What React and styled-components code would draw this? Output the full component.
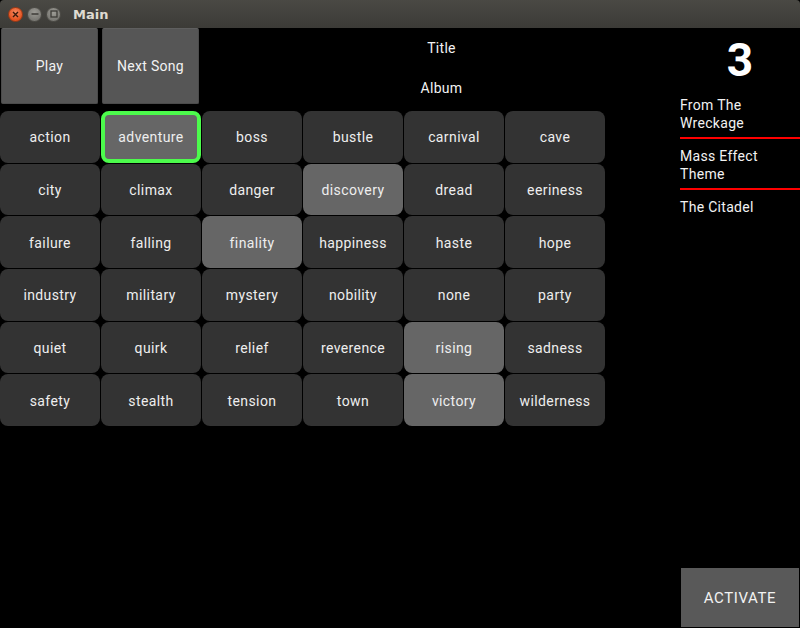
import React from 'react';
import styled, { createGlobalStyle } from 'styled-components';

const GlobalStyle = createGlobalStyle`
  html, body { margin: 0; padding: 0; background: #000; }
  body { font-family: Roboto, "Liberation Sans", sans-serif; }
`;

const moods = [
  'action', 'adventure', 'boss', 'bustle', 'carnival', 'cave',
  'city', 'climax', 'danger', 'discovery', 'dread', 'eeriness',
  'failure', 'falling', 'finality', 'happiness', 'haste', 'hope',
  'industry', 'military', 'mystery', 'nobility', 'none', 'party',
  'quiet', 'quirk', 'relief', 'reverence', 'rising', 'sadness',
  'safety', 'stealth', 'tension', 'town', 'victory', 'wilderness'
];
const lit = ['adventure', 'discovery', 'finality', 'rising', 'victory'];
const queue = ['From The Wreckage', 'Mass Effect Theme', 'The Citadel'];

export default function App() {
  return (
    <>
      <GlobalStyle />
      <Window>
        <TitleBar>
          <WinButton $kind="close">
            <svg width="7" height="7" viewBox="0 0 7 7">
              <path d="M1 1 L6 6 M6 1 L1 6" stroke="#3a1a0c" strokeWidth="1.4" />
            </svg>
          </WinButton>
          <WinButton>
            <svg width="8" height="8" viewBox="0 0 8 8">
              <path d="M0.5 4 H7.5" stroke="#3c3b37" strokeWidth="1.5" />
            </svg>
          </WinButton>
          <WinButton>
            <svg width="8" height="8" viewBox="0 0 8 8">
              <rect x="1" y="1" width="6" height="6" fill="none" stroke="#3c3b37" strokeWidth="1.3" />
            </svg>
          </WinButton>
          <WinTitle>Main</WinTitle>
        </TitleBar>
        <Main>
          <LeftCol>
            <TopRow>
              <BigButton>Play</BigButton>
              <BigButton>Next Song</BigButton>
              <Info>
                <InfoLine>Title</InfoLine>
                <InfoLine>Album</InfoLine>
              </Info>
            </TopRow>
            <MoodGrid>
              {moods.map(m => (
                <Mood key={m} $lit={lit.includes(m)} $selected={m === 'adventure'}>{m}</Mood>
              ))}
            </MoodGrid>
          </LeftCol>
          <RightCol>
            <Count>3</Count>
            {queue.map((q, i) => (
              <QueueItem key={q} $last={i === queue.length - 1}>{q}</QueueItem>
            ))}
            <Spacer />
            <Activate>Activate</Activate>
          </RightCol>
        </Main>
      </Window>
    </>
  );
}

const Window = styled.div`
  width: 800px;
  height: 628px;
  display: flex;
  flex-direction: column;
  background: #000;
  overflow: hidden;
`;

const TitleBar = styled.div`
  height: 28px;
  flex-shrink: 0;
  display: flex;
  align-items: center;
  padding-left: 8px;
  gap: 4px;
  background: linear-gradient(#4a4944, #3c3b37);
  border-radius: 4px 4px 0 0;
  box-sizing: border-box;
`;

const WinButton = styled.div`
  width: 15px;
  height: 15px;
  border-radius: 50%;
  display: flex;
  align-items: center;
  justify-content: center;
  box-sizing: border-box;
  border: 1px solid ${p => (p.$kind === 'close' ? '#9e3a16' : '#4e4d48')};
  background: ${p => (p.$kind === 'close'
    ? 'radial-gradient(circle at 50% 35%, #f58a62, #e5521f 70%)'
    : 'radial-gradient(circle at 50% 35%, #9c9b95, #7a7974 70%)')};
`;

const WinTitle = styled.div`
  margin-left: 8px;
  color: #dfdbd2;
  font-family: "DejaVu Sans", sans-serif;
  font-weight: bold;
  font-size: 13px;
`;

const Main = styled.div`
  flex: 1;
  display: flex;
  min-height: 0;
`;

const LeftCol = styled.div`
  width: 680px;
  display: flex;
  flex-direction: column;
`;

const TopRow = styled.div`
  height: 83px;
  display: flex;
  align-items: flex-start;
  padding-left: 1px;
  gap: 4px;
`;

const BigButton = styled.div`
  width: 97px;
  height: 76px;
  box-sizing: border-box;
  display: flex;
  align-items: center;
  justify-content: center;
  background: #565656;
  border: 1px solid #4b4b4b;
  border-top-color: #5f5f5f;
  border-radius: 2px;
  color: #f2f2f2;
  font-size: 14px;
  letter-spacing: 0.3px;
`;

const Info = styled.div`
  flex: 1;
  display: flex;
  flex-direction: column;
  align-items: center;
  padding-top: 11px;
  gap: 22px;
`;

const InfoLine = styled.div`
  color: #f2f2f2;
  font-size: 14px;
  line-height: 18px;
  letter-spacing: 0.3px;
`;

const MoodGrid = styled.div`
  width: 605px;
  height: 315px;
  display: grid;
  grid-template-columns: repeat(6, 1fr);
  grid-template-rows: repeat(6, 1fr);
  gap: 1px;
`;

const Mood = styled.div`
  display: flex;
  align-items: center;
  justify-content: center;
  box-sizing: border-box;
  padding-top: 1px;
  border-radius: 8px;
  background: ${p => (p.$lit ? '#666666' : '#333333')};
  border: ${p => (p.$selected ? '4px solid #4cfb4c' : 'none')};
  color: #eeeeee;
  font-size: 14px;
  letter-spacing: 0.4px;
`;

const RightCol = styled.div`
  width: 120px;
  display: flex;
  flex-direction: column;
`;

const Count = styled.div`
  height: 60px;
  padding-top: 4px;
  box-sizing: border-box;
  line-height: 56px;
  text-align: center;
  color: #fff;
  font-size: 46px;
  font-weight: bold;
`;

const QueueItem = styled.div`
  padding: 8px 12px 5px 0;
  color: #f2f2f2;
  font-size: 14px;
  line-height: 18px;
  letter-spacing: 0.3px;
  border-bottom: 2px solid ${p => (p.$last ? 'transparent' : '#ff0000')};
`;

const Spacer = styled.div`
  flex: 1;
`;

const Activate = styled.div`
  margin: 0 1px 1px 1px;
  height: 59px;
  display: flex;
  align-items: center;
  justify-content: center;
  background: #595959;
  color: #f2f2f2;
  font-size: 15px;
  text-transform: uppercase;
  letter-spacing: 0.6px;
`;
